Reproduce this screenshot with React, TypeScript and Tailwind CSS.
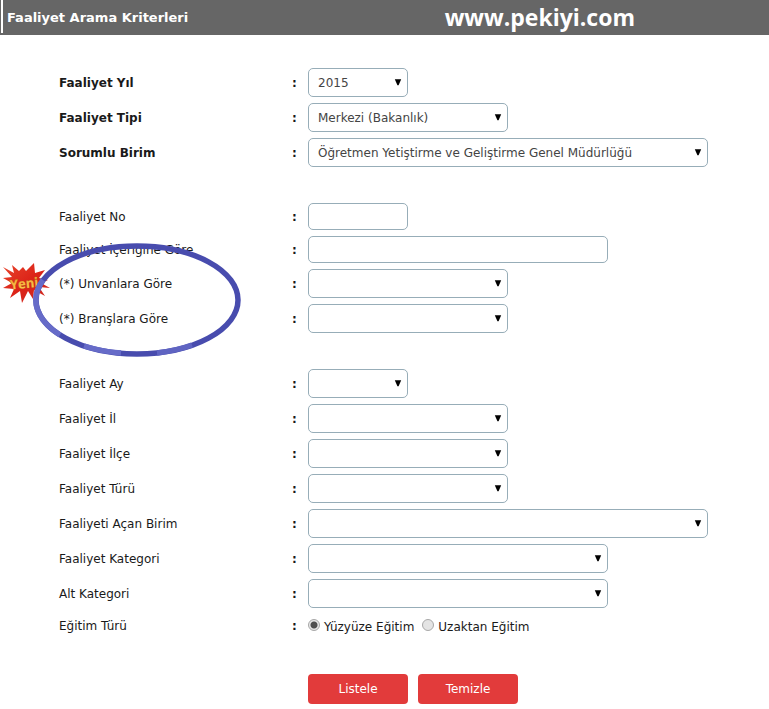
import React, { useState } from 'react';

type Field = {
  id: string;
  label: string;
  kind: 'select' | 'text';
  width: string;
  options?: string[];
  bold?: boolean;
};

const SMALL = 'max-w-[100px]';
const MEDIUM = 'max-w-[200px]';
const LARGE = 'max-w-[300px]';
const FULL = 'max-w-[400px]';

const mainFields: Field[] = [
  { id: 'yil', label: 'Faaliyet Yıl', kind: 'select', width: SMALL, options: ['2015'], bold: true },
  { id: 'tip', label: 'Faaliyet Tipi', kind: 'select', width: MEDIUM, options: ['Merkezi (Bakanlık)'], bold: true },
  {
    id: 'birim',
    label: 'Sorumlu Birim',
    kind: 'select',
    width: FULL,
    options: ['Öğretmen Yetiştirme ve Geliştirme Genel Müdürlüğü'],
    bold: true
  }
];

const contentFields: Field[] = [
  { id: 'no', label: 'Faaliyet No', kind: 'text', width: SMALL },
  { id: 'icerik', label: 'Faaliyet İçeriğine Göre', kind: 'text', width: LARGE }
];

const newFields: Field[] = [
  { id: 'unvan', label: '(*) Unvanlara Göre', kind: 'select', width: MEDIUM },
  { id: 'brans', label: '(*) Branşlara Göre', kind: 'select', width: MEDIUM }
];

const detailFields: Field[] = [
  { id: 'ay', label: 'Faaliyet Ay', kind: 'select', width: SMALL },
  { id: 'il', label: 'Faaliyet İl', kind: 'select', width: MEDIUM },
  { id: 'ilce', label: 'Faaliyet İlçe', kind: 'select', width: MEDIUM },
  { id: 'tur', label: 'Faaliyet Türü', kind: 'select', width: MEDIUM },
  { id: 'acan', label: 'Faaliyeti Açan Birim', kind: 'select', width: FULL },
  { id: 'kategori', label: 'Faaliyet Kategori', kind: 'select', width: LARGE },
  { id: 'alt', label: 'Alt Kategori', kind: 'select', width: LARGE }
];

const egitimTurleri = ['Yüzyüze Eğitim', 'Uzaktan Eğitim'];

function FieldRow({ field }: { field: Field }) {
  return (
    <div className="flex items-center py-[3px]">
      <label htmlFor={field.id} className={`w-[233px] shrink-0 ${field.bold ? 'font-bold' : ''}`}>
        {field.label}
      </label>
      <span className="w-4 shrink-0 font-bold">:</span>
      <div className={`relative flex-1 ${field.width}`}>
        {field.kind === 'select' ? (
          <>
            <select
              id={field.id}
              className="block w-full h-[29px] appearance-none rounded-[5px] border border-[#97adb8] bg-white pl-[9px] pr-6 text-[#444]"
            >
              {(field.options ?? ['']).map((o) => (
                <option key={o}>{o}</option>
              ))}
            </select>
            <svg viewBox="0 0 8 7" className="pointer-events-none absolute right-[6px] top-[11px] h-[7px] w-2">
              <path d="M0.8 0.3h6.4L4.6 6.3H3.4z" fill="#000" />
            </svg>
          </>
        ) : (
          <input
            id={field.id}
            type="text"
            className="block w-full h-[27px] rounded-[5px] border border-[#97adb8] bg-white px-[9px] text-[#444]"
          />
        )}
      </div>
    </div>
  );
}

function NewBadge() {
  return (
    <svg viewBox="0 0 48 40" className="pointer-events-none absolute -left-[57px] -top-[3px] h-10 w-12" role="img" aria-label="Yeni">
      <defs>
        <linearGradient id="burst" x1="0" y1="0" x2="1" y2="1">
          <stop offset="0" stopColor="#e8452c" />
          <stop offset="0.5" stopColor="#dc2318" />
          <stop offset="1" stopColor="#cc2a20" />
        </linearGradient>
        <linearGradient id="gold" x1="0" y1="0" x2="0" y2="1">
          <stop offset="0" stopColor="#f0a030" />
          <stop offset="1" stopColor="#fdcf52" />
        </linearGradient>
      </defs>
      <path
        d="M1 4 12 10 10 2 17 8 21 4 24 8 32 0 33 10 43 7 37 15 46 17 39 20 48 25 37 24 43 33 32 27 31 36 26 28 20 40 18 28 8 35 12 26 1 25 10 20 1 15 10 14z"
        fill="url(#burst)"
      />
      <text
        x="22"
        y="25"
        textAnchor="middle"
        transform="rotate(-6 23 20)"
        fill="url(#gold)"
        stroke="#b8541a"
        strokeWidth="0.8"
        paintOrder="stroke"
        className="font-['Open_Sans',sans-serif] text-[13px] font-bold"
      >
        Yeni
      </text>
    </svg>
  );
}

function Circle() {
  return (
    <svg viewBox="0 0 208 116" className="pointer-events-none absolute -left-[26px] -top-6 h-[116px] w-52" fill="none" strokeWidth="5.5">
      <ellipse cx="104" cy="58" rx="101" ry="54" stroke="#484cae" />
      <path d="M10 38A101 54 0 0 0 27 93" stroke="#666bc8" />
      <path d="M51 104A101 54 0 0 0 88 111" stroke="#666bc8" />
      <path d="M124 111A101 54 0 0 0 159 103" stroke="#5f64c2" />
    </svg>
  );
}

export default function App() {
  const [egitim, setEgitim] = useState(egitimTurleri[0]);

  return (
    <div className="bg-white font-['DejaVu_Sans',Verdana,sans-serif] text-[12px] leading-4 text-[#1a1a1a]">
      <header className="flex h-[35px] items-center bg-[#666] text-white">
        <div className="ml-px h-[33px] w-[2px] self-start bg-white" />
        <h1 className="ml-1 flex-1 text-[13px] font-bold">Faaliyet Arama Kriterleri</h1>
        <a href="#" className="mr-[134px] pb-[2px] font-['Open_Sans',sans-serif] text-[23px] font-bold leading-8">
          www.pekiyi.com
        </a>
      </header>

      <form className="pt-[30px] pl-[59px] pr-4" onSubmit={(e) => e.preventDefault()}>
        <div>
          {mainFields.map((f) => <FieldRow key={f.id} field={f} />)}
        </div>

        <div className="mt-[30px]">
          {contentFields.map((f) => <FieldRow key={f.id} field={f} />)}
          <div className="relative">
            {newFields.map((f) => <FieldRow key={f.id} field={f} />)}
            <NewBadge />
            <Circle />
          </div>
        </div>

        <div className="mt-[30px]">
          {detailFields.map((f) => <FieldRow key={f.id} field={f} />)}

          {/* Egitim turu */}
          <div className="flex h-[30px] items-center" role="radiogroup" aria-label="Eğitim Türü">
            <span className="w-[233px] shrink-0">Eğitim Türü</span>
            <span className="w-4 shrink-0 font-bold">:</span>
            <div className="flex gap-2">
              {egitimTurleri.map((tur) => (
                <label key={tur} className="flex items-start gap-1 pt-[2px]">
                  <input
                    type="radio"
                    name="egitim"
                    checked={egitim === tur}
                    onChange={() => setEgitim(tur)}
                    className="h-3 w-3 appearance-none rounded-full border border-[#a8a8a8] bg-[#e4e4e4] checked:bg-[radial-gradient(circle,#505050_0_3px,#e8e8e8_4px)]"
                  />
                  {tur}
                </label>
              ))}
            </div>
          </div>
        </div>

        <div className="mt-[33px] flex gap-[10px] pl-[249px] pb-[5px]">
          <button type="submit" className="h-[30px] w-[100px] rounded bg-[#e23b3b] text-white">
            Listele
          </button>
          <button type="reset" className="h-[30px] w-[100px] rounded bg-[#e23b3b] text-white">
            Temizle
          </button>
        </div>
      </form>
    </div>
  );
}
